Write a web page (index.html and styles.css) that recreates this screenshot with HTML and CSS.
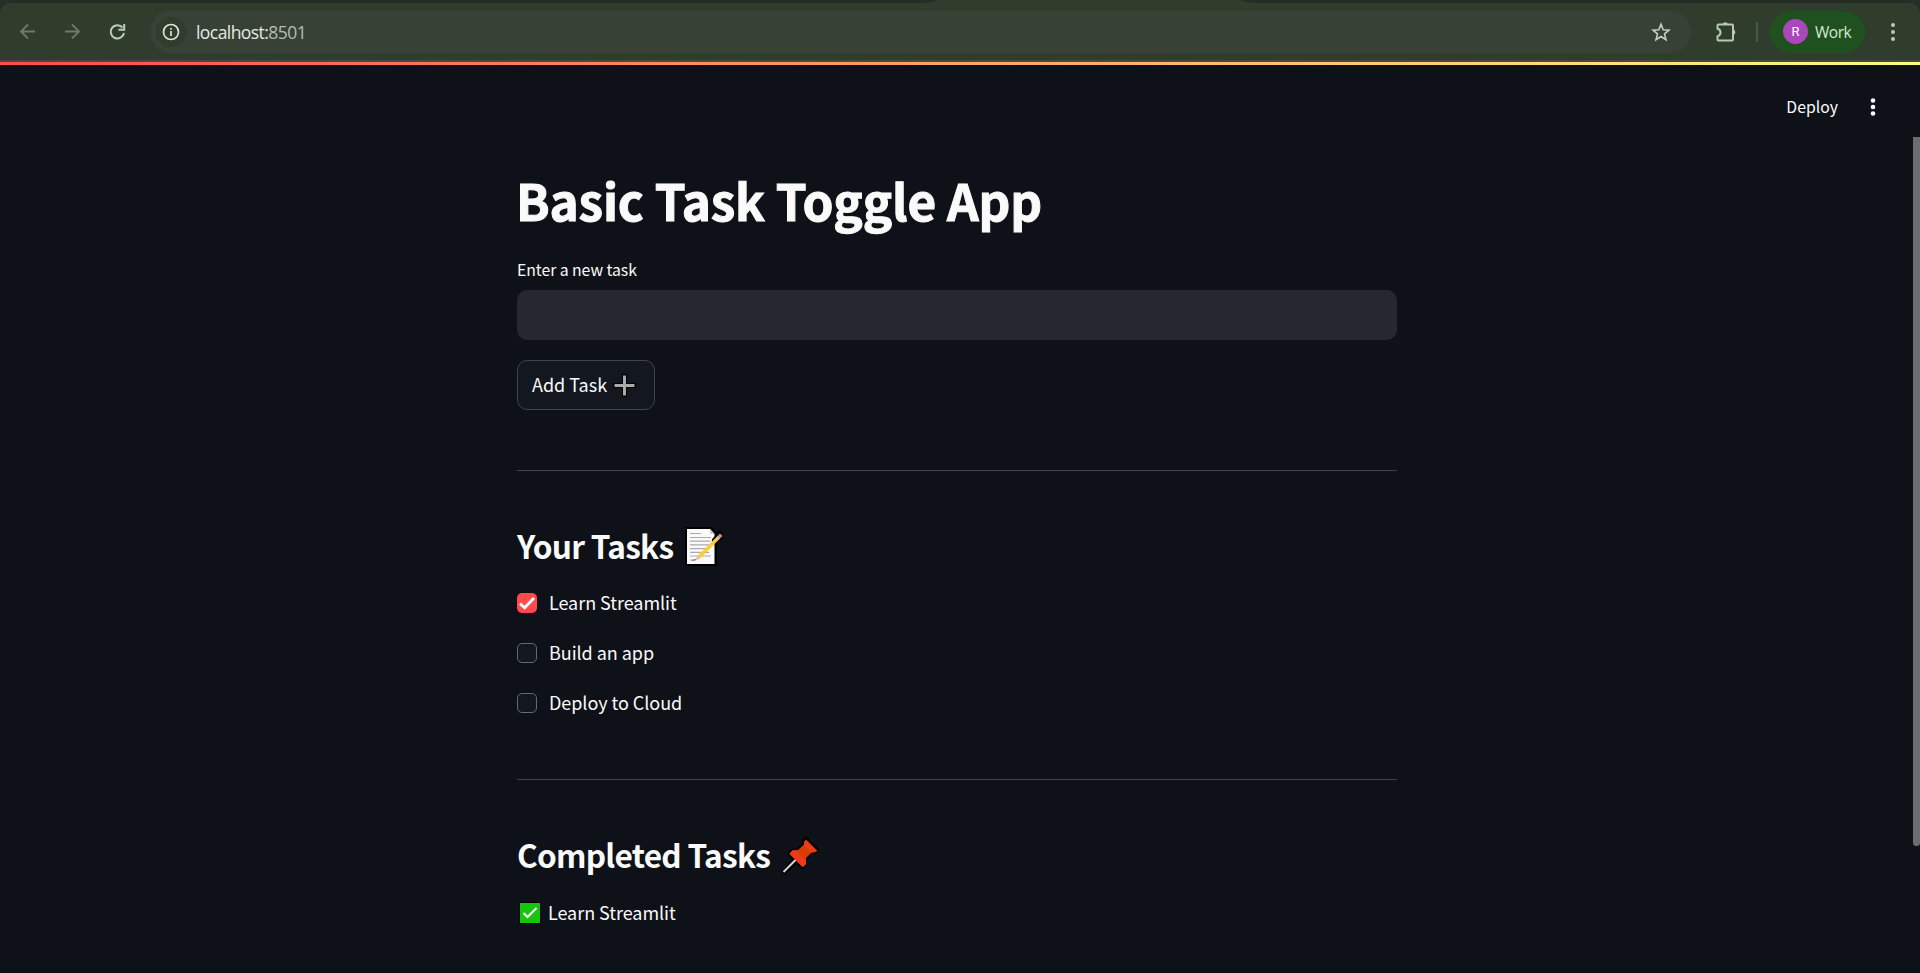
FILE: index.html
```html
<!DOCTYPE html>
<html lang="en">
<head>
<meta charset="utf-8">
<title>Basic Task Toggle App</title>
<link rel="stylesheet" href="styles.css">
</head>
<body>
<div class="browser">
  <div class="tabstrip"><svg class="active-tab" width="330" height="3" viewBox="0 0 330 3"><path d="M0 3Q6 3 12 0H315Q321 3 328 3Z" fill="#303d2d"/></svg></div>
  <div class="toolbar-wrap">
    <div class="toolbar">
      <svg class="nav-icons" width="150" height="57" viewBox="0 3 150 57" fill="none" stroke-width="1.9">
        <path d="M35 31.500H21M28 24.500L21 31.500L28 38.500" stroke="#6c7a69"/>
        <path d="M65 31.500H79M72 24.500L79 31.500L72 38.500" stroke="#6c7a69"/>
        <path d="M122.500 27.500A6.700 6.700 0 1 0 124 33M124.200 24V29.700H118.500" stroke="#bdd0b7" stroke-width="2"/>
      </svg>
      <div class="omnibox">
        <span class="site-info"><svg width="18" height="18" viewBox="0 0 18 18"><circle cx="9" cy="9" r="7.500" fill="none" stroke="#dbe3d6" stroke-width="1.700"/><path d="M9 8V13M9 5V6.700" stroke="#dbe3d6" stroke-width="1.700"/></svg></span>
        <span class="url">localhost:<span class="port">8501</span></span>
        <svg class="star" width="20" height="20" viewBox="0 0 20 20"><path d="M10 2.200L12.200 7.700L18.100 8.100L13.500 11.900L15 17.700L10 14.500L5 17.700L6.500 11.900L1.900 8.100L7.800 7.700Z" fill="none" stroke="#c8cec5" stroke-width="1.600"/></svg>
      </div>
      <svg class="puzzle" width="22" height="22" viewBox="0 0 22 22"><path d="M3.500 3.500H17Q18 3.500 18 4.500V18.500Q18 19.500 17 19.500H3.500Q2.500 19.500 2.500 18.500V15.200Q5.500 14.500 5.500 11.500Q5.500 8.500 2.500 7.800V4.500Q2.500 3.500 3.500 3.500Z" fill="none" stroke="#b5cbae" stroke-width="2"/><path d="M7.500 3A3 3 0 0 1 13 3ZM18.500 8.500A3 3 0 0 1 18.500 14Z" fill="#b5cbae"/></svg>
      <span class="separator"></span>
      <div class="profile"><span class="avatar">R</span><span class="profile-name">Work</span></div>
      <svg class="browser-menu" width="6" height="20" viewBox="0 0 6 20" fill="#b9ccb4"><circle cx="3" cy="3" r="2"/><circle cx="3" cy="10" r="2"/><circle cx="3" cy="17" r="2"/></svg>
    </div>
  </div>
  <div class="toolbar-edge"></div>
</div>
<div class="decoration"></div>
<div class="app">
  <header class="app-header">
    <span class="deploy">Deploy</span>
    <svg width="6" height="18" viewBox="0 0 6 18" fill="#fafafa"><circle cx="3" cy="2.500" r="2.300"/><circle cx="3" cy="9" r="2.300"/><circle cx="3" cy="15.500" r="2.300"/></svg>
  </header>
  <main class="content">
    <h1 class="title"><span>Basic Task Toggle App</span></h1>
    <label class="field-label" for="task">Enter a new task</label>
    <input class="field" id="task" type="text">
    <button class="add" type="button"><span class="add-text">Add Task</span><svg width="23" height="23" viewBox="0 0 23 23"><path d="M9 0H14V9H23V14H14V23H9V14H0V9H9Z" fill="#000"/><path d="M11.500 1.500V21.500M1.500 11.500H21.500" stroke="#aaa" stroke-width="3"/></svg></button>
    <hr class="divider">
    <h2 class="heading tasks-heading"><span>Your Tasks</span>
      <svg width="40" height="40" viewBox="0 0 40 40"><path d="M1 1H28L32 6L36 4L39 8L33 16V40H1Z" fill="#000"/><path d="M3 3H26L30.500 8V38H3Z" fill="#fafafa"/><path d="M26 3V8H30.500Z" fill="#ccc"/><path d="M6 7.500H17M6 11.500H27M6 15.200H26M6 18.900H27M6 22.600H26M6 26.300H25M6 30H27M6 34H12" stroke="#aaa" stroke-width="1.200"/><path d="M31.500 14.500L36.500 9.500" stroke="#000" stroke-width="7" stroke-linecap="round"/><path d="M15 31L34 12" stroke="#fc3" stroke-width="3.600"/><path d="M33.600 12.400L35.400 10.600" stroke="#bbb" stroke-width="3.600"/><path d="M35.300 10.700L37.300 8.700" stroke="#db7f7f" stroke-width="3.600"/><path d="M11 34.800L13.700 29.700L16.300 32.300Z" fill="#e8b59f"/><path d="M8 34.500L12 33.500" stroke="#777"/></svg>
    </h2>
    <div class="tasks">
      <div class="task"><span class="box checked"><svg width="20" height="20" viewBox="0 0 20 20"><path d="M3 10.500L7.600 14.800L17 5" fill="none" stroke="#fafafa" stroke-width="2.900"/></svg></span><span class="name">Learn Streamlit</span></div>
      <div class="task"><span class="box"></span><span class="name">Build an app</span></div>
      <div class="task"><span class="box"></span><span class="name">Deploy to Cloud</span></div>
    </div>
    <hr class="divider second">
    <h2 class="heading done-heading"><span>Completed Tasks</span>
      <svg width="40" height="40" viewBox="0 0 40 40"><path d="M25 1L38.500 14.500L34.500 19L31 19.500L26 24.500L25.500 30.500L21.500 34.500L16 29L4 39.500L0 37.500L11.500 24.500L5.500 18.500L10 14L16 13.500L21 8.500L21 5Z" fill="#000"/><path d="M2.500 37L15.500 24" stroke="#d8d8d8" stroke-width="2"/><path d="M11.500 15.500L17 15L23 9.500L31 17L25 23L25 29L21.500 32L8.500 19Z" fill="#da3b01"/><path d="M8.500 18.500L11.700 15.200L14.500 15L25 26V29L22 32ZM25 4.500L36.500 16L33 17.500H30L23 10.500V7Z" fill="#f03a17"/></svg>
    </h2>
    <div class="done"><svg width="22" height="22" viewBox="0 0 22 22"><path d="M0 0H22V22H0Z" fill="#000"/><path d="M1 1H21V21H1Z" fill="#16c60c"/><path d="M4.500 11L8.500 15L17.500 6" fill="none" stroke="#fff" stroke-width="2"/></svg><span class="done-name">Learn Streamlit</span></div>
  </main>
  <div class="scrollbar"></div>
</div>
</body>
</html>
```
FILE: styles.css
```css
* { box-sizing: border-box; }
body {
  margin: 0;
  height: 973px;
  overflow: hidden;
  background: #0e1117;
  color: #fafafa;
  font-family: "Noto Sans CJK SC", "Noto Sans", sans-serif;
}
svg { display: block; flex: none; }

/* Browser chrome */
.tabstrip { height: 3px; background: #252d25; padding-left: 925px; }
.toolbar-wrap { background: #252d25; }
.toolbar {
  height: 57px;
  display: flex;
  align-items: center;
  background: #303d2d;
  border-radius: 10px 10px 0 0;
}
.toolbar-edge { height: 2px; background: #464846; }
.omnibox {
  width: 1541px;
  height: 42px;
  border-radius: 21px;
  background: #374136;
  display: flex;
  align-items: center;
  padding: 0 20px 0 6px;
}
.site-info {
  width: 30px;
  height: 30px;
  border-radius: 50%;
  background: #303d2d;
  display: grid;
  place-items: center;
}
.url {
  margin-left: 10px;
  padding-top: 1px;
  font: 17.500px/24px "Open Sans", sans-serif;
  letter-spacing: -0.56px;
  color: #e6ebe1;
}
.port { color: #b5beb0; }
.star { margin-left: auto; }
.puzzle { margin-left: 24px; }
.separator { width: 2px; height: 20px; margin-left: 19px; background: #475b43; border-radius: 1px; }
.profile {
  width: 95px;
  height: 42px;
  margin-left: 12px;
  padding-left: 13px;
  border-radius: 21px;
  background: #1f5120;
  display: flex;
  align-items: center;
  gap: 7px;
}
.avatar {
  width: 25px;
  height: 25px;
  border-radius: 50%;
  background: #ab47bc;
  color: #fff;
  font: 13px/25px Roboto, sans-serif;
  text-align: center;
}
.profile-name { font: 15.500px/24px "Open Sans", sans-serif; letter-spacing: -0.5px; color: #d5ead0; }
.browser-menu { margin-left: 25px; }

/* App */
.decoration { height: 3px; background: linear-gradient(90deg, #ff4b4b, #fffd80); }
.app { height: 908px; display: grid; grid-template: 72px 836px / 1913px 7px; }
.app-header {
  grid-column: 1 / 3;
  display: flex;
  justify-content: flex-end;
  align-items: center;
  gap: 32px;
  padding: 12px 44px 0 0;
}
.deploy { font-size: 15.800px; line-height: 24px; padding-bottom: 1px; }
.scrollbar { height: 709px; background: #6c6d70; border-radius: 0 0 4px 4px; }
.content {
  width: 880px;
  margin-left: 517px;
  padding-top: 30px;
  display: flex;
  flex-direction: column;
  align-items: flex-start;
}
.title {
  margin: 0 0 25px -1px;
  font-size: 49.500px;
  line-height: 66px;
  font-weight: 700;
  letter-spacing: -0.19px;
  -webkit-text-stroke: 1px #fafafa;
  white-space: nowrap;
}
.field-label { font-size: 15.800px; line-height: 24px; letter-spacing: -0.06px; margin-bottom: 8px; }
.field {
  width: 880px;
  height: 50px;
  border: 0;
  border-radius: 10px;
  background: #262730;
  color: #fafafa;
  padding: 0 15px;
}
.add {
  width: 138px;
  height: 50px;
  margin-top: 20px;
  padding: 0 0 0 14px;
  border: 1px solid #41444c;
  border-radius: 10px;
  background: #131720;
  color: #fafafa;
  font: 18px/26px "Noto Sans CJK SC", sans-serif;
  display: flex;
  align-items: center;
  gap: 6px;
}
.add-text { padding-bottom: 2px; }
.divider { width: 880px; height: 1px; border: 0; margin: 60px 0 53px; background: #41434a; }
.divider.second { margin: 66px 0 53px; }
.heading {
  margin: 0;
  height: 42px;
  display: flex;
  align-items: center;
  gap: 11px;
  font-size: 31.600px;
  line-height: 42px;
  font-weight: 600;
  letter-spacing: -0.74px;
  white-space: nowrap;
}
.heading svg { margin-top: 2px; }
.tasks { display: grid; gap: 30px; margin-top: 27px; }
.task { height: 20px; display: flex; align-items: center; gap: 12px; }
.box {
  width: 20px;
  height: 20px;
  border: 1px solid #666970;
  border-radius: 5px;
  background: #131720;
}
.box.checked { border: 0; background: #ff4b4b; }
.name, .done-name { font-size: 18px; line-height: 26px; letter-spacing: -0.05px; }
.name { padding-bottom: 2px; }
.done { display: flex; align-items: center; gap: 7px; margin: 24px 0 0 2px; }
.done svg { margin-top: 2px; }
```
